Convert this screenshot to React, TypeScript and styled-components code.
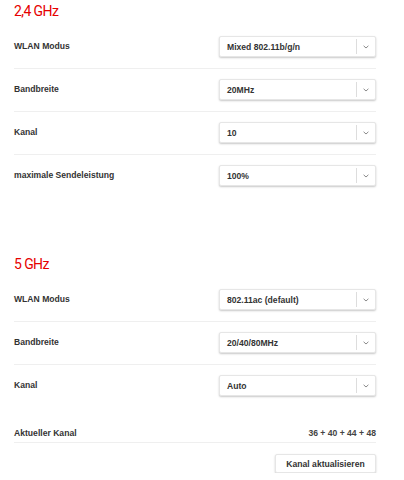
import React from "react";
import styled, { createGlobalStyle } from "styled-components";

const Global = createGlobalStyle`
  html, body { margin: 0; padding: 0; background: #ffffff; }
  body { font-family: "Liberation Sans", Arial, sans-serif; color: #333333; }
`;

const Page = styled.div`
  width: 404px;
  box-sizing: border-box;
  padding: 0 28px 0 14px;
`;

const Section = styled.section<{ $first?: boolean }>`
  margin-top: ${(p) => (p.$first ? 0 : 55)}px;
`;

const Title = styled.h2`
  margin: 0 0 6px;
  padding-top: 3px;
  font-family: Roboto, "Liberation Sans", sans-serif;
  font-weight: 400;
  font-size: 14px;
  line-height: 17px;
  letter-spacing: -0.6px;
  color: #e60000;
`;

const Row = styled.div<{ $border?: boolean }>`
  display: flex;
  align-items: center;
  justify-content: space-between;
  padding: 10px 0 11px;
  border-bottom: 1px solid ${(p) => (p.$border ? "#efefef" : "transparent")};
`;

const InfoRow = styled(Row)`
  padding: 20px 0 3px;
  border-bottom: 1px solid #efefef;
`;

const Label = styled.span`
  font-weight: 700;
  font-size: 8.6px;
  line-height: 11px;
  color: #333333;
`;

const Value = styled.span`
  font-size: 8.6px;
  line-height: 11px;
  font-weight: 700;
  color: #444444;
`;

const SelectBox = styled.div`
  width: 157px;
  height: 21px;
  box-sizing: border-box;
  display: flex;
  align-items: stretch;
  background: #ffffff;
  border: 1px solid #e6e6e6;
  border-radius: 2px;
  box-shadow: 0 1px 2px rgba(0, 0, 0, 0.22);
`;

const SelectText = styled.span`
  flex: 1;
  display: flex;
  align-items: center;
  padding-left: 7px;
  font-weight: 700;
  font-size: 8.6px;
  color: #333333;
  white-space: nowrap;
`;

const Arrow = styled.span`
  width: 18px;
  margin: 2px 0;
  border-left: 1px solid #dddddd;
  display: flex;
  align-items: center;
  justify-content: center;
`;

const ButtonRow = styled.div`
  display: flex;
  justify-content: flex-end;
  padding-top: 11px;
`;

const Button = styled.button`
  width: 101px;
  height: 19px;
  box-sizing: border-box;
  padding: 0;
  background: #ffffff;
  border: 1px solid #e6e6e6;
  border-radius: 2px;
  box-shadow: 0 1px 2px rgba(0, 0, 0, 0.22);
  font-family: "Liberation Sans", Arial, sans-serif;
  font-weight: 700;
  font-size: 8.6px;
  color: #333333;
`;

const Chevron = () => (
  <svg width="6" height="4" viewBox="0 0 6 4">
    <path d="M0.6 0.8 L3 3 L5.4 0.8" fill="none" stroke="#8a8a8a" strokeWidth="1" />
  </svg>
);

const Select = ({ value }: { value: string }) => (
  <SelectBox>
    <SelectText>{value}</SelectText>
    <Arrow>
      <Chevron />
    </Arrow>
  </SelectBox>
);

type Item = { label: string; value: string };

const band24: Item[] = [
  { label: "WLAN Modus", value: "Mixed 802.11b/g/n" },
  { label: "Bandbreite", value: "20MHz" },
  { label: "Kanal", value: "10" },
  { label: "maximale Sendeleistung", value: "100%" },
];

const band5: Item[] = [
  { label: "WLAN Modus", value: "802.11ac (default)" },
  { label: "Bandbreite", value: "20/40/80MHz" },
  { label: "Kanal", value: "Auto" },
];

export default function App() {
  return (
    <>
      <Global />
      <Page>
        <Section $first>
          <Title>2,4 GHz</Title>
          {band24.map((it, i) => (
            <Row key={it.label} $border={i < band24.length - 1}>
              <Label>{it.label}</Label>
              <Select value={it.value} />
            </Row>
          ))}
        </Section>
        <Section>
          <Title>5 GHz</Title>
          {band5.map((it, i) => (
            <Row key={it.label} $border={i < band5.length - 1}>
              <Label>{it.label}</Label>
              <Select value={it.value} />
            </Row>
          ))}
          <InfoRow>
            <Label>Aktueller Kanal</Label>
            <Value>36 + 40 + 44 + 48</Value>
          </InfoRow>
          <ButtonRow>
            <Button>Kanal aktualisieren</Button>
          </ButtonRow>
        </Section>
      </Page>
    </>
  );
}
